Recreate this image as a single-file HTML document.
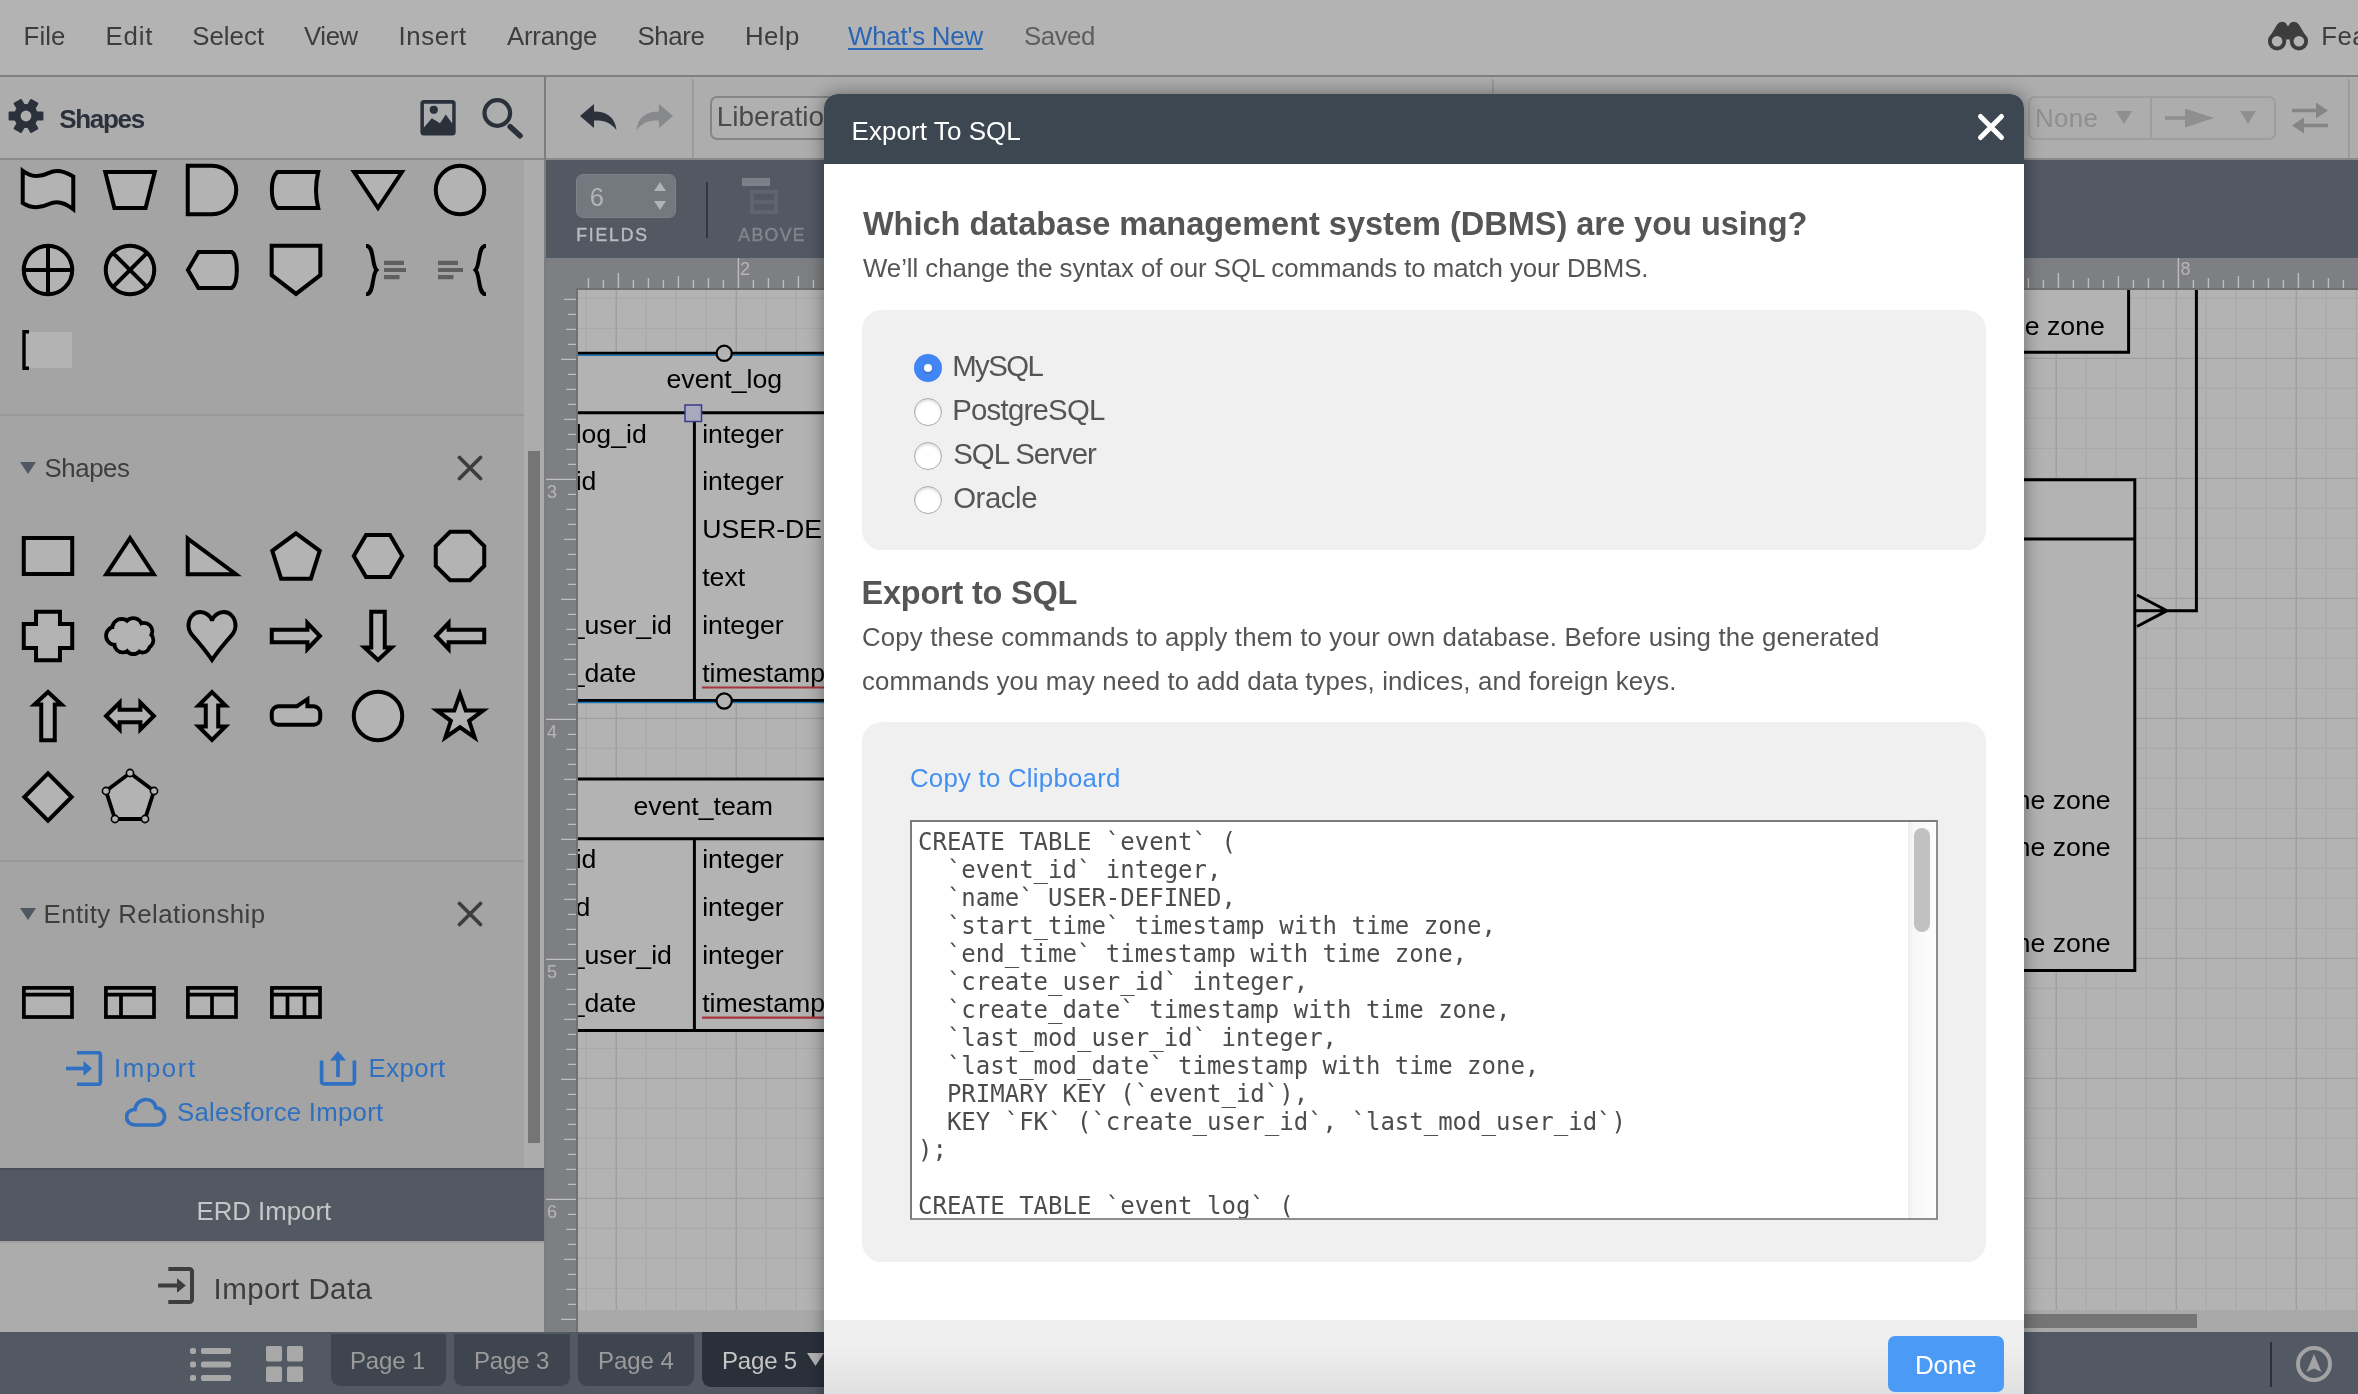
<!DOCTYPE html>
<html lang="en">
<head>
<meta charset="utf-8">
<title>Export To SQL</title>
<style>
*{box-sizing:border-box;margin:0;padding:0}
html,body{width:2358px;height:1394px;overflow:hidden;background:#b3b3b3}
body{will-change:transform;position:relative;font-family:"Liberation Sans",sans-serif;color:#3c3c3c}
.abs{position:absolute}
.t{position:absolute;white-space:nowrap;line-height:1}
#menubar{position:absolute;left:0;top:0;width:2358px;height:77px;background:#b3b3b3;border-bottom:2px solid #808080}
#lp-head{position:absolute;left:0;top:77px;width:545px;height:83px;background:#adadad;border-bottom:2px solid #8a8a8a}
#lp-body{position:absolute;left:0;top:160px;width:524px;height:1008px;background:#a4a4a4}
#lp-track{position:absolute;left:524px;top:160px;width:21px;height:1008px;background:#acacac}
#lp-thumb{position:absolute;left:528px;top:451px;width:12px;height:692px;background:#757575}
#vdiv{position:absolute;left:544px;top:77px;width:2px;height:1255px;background:#7d7d7d}
#erdbar{position:absolute;left:0;top:1168px;width:544px;height:73px;background:#525963;border-top:2px solid #474d56}
#impdata{position:absolute;left:0;top:1241px;width:544px;height:91px;background:#acacac;border-top:2px solid #a0a0a0}
#toolbar{position:absolute;left:546px;top:77px;width:1812px;height:83px;background:#adadad;border-bottom:2px solid #8a8a8a}
#darkbar{position:absolute;left:546px;top:160px;width:1812px;height:98px;background:#525963}
#bottombar{position:absolute;left:0;top:1332px;width:2358px;height:62px;background:#525963}
#hscroll{position:absolute;left:578px;top:1310px;width:1780px;height:22px;background:#a9a9a9}
#hthumb{position:absolute;left:900px;top:1314px;width:1297px;height:14px;background:#757575}
.tab{position:absolute;top:1334px;height:52px;background:#3e454f;border-radius:0 0 9px 9px}
#modal{position:absolute;left:824px;top:94px;width:1200px;height:1320px;background:#fff;border-radius:14px 14px 0 0;box-shadow:0 0 18px 0 rgba(0,0,0,.42);overflow:hidden;color:#555}
#mhead{position:absolute;left:0;top:0;width:1200px;height:70px;background:#3d4751}
#mfoot{position:absolute;left:0;top:1226px;width:1200px;height:80px;background:linear-gradient(#f0f0f0 0%,#efefef 30%,#dedede 100%)}
.gbox{position:absolute;left:38px;width:1124px;background:#f0f0f0;border-radius:20px}
.radio{position:absolute;left:90px;width:28px;height:28px;border-radius:50%;background:#fff;border:1.5px solid #a9a9a9;box-shadow:inset 0 2px 3px rgba(0,0,0,.13)}
.radio.on{background:#4285f4;border:0;box-shadow:none}
.radio.on::after{content:"";position:absolute;left:10px;top:10px;width:8px;height:8px;border-radius:50%;background:#fff;box-shadow:0 1px 1px rgba(0,0,0,.3)}
#ta{position:absolute;left:86px;top:726px;width:1028px;height:400px;background:#fff;border:2px solid #7c7c7c;border-right-color:#8e8e8e;border-bottom-color:#8e8e8e;overflow:hidden}
#ta pre{position:absolute;left:6px;top:6px;font-family:"DejaVu Sans Mono","Liberation Mono",monospace;font-size:24px;line-height:28px;color:#4c4c4c;white-space:pre}
#ta-track{position:absolute;right:0;top:0;width:28px;height:396px;background:linear-gradient(90deg,#ececec 0,#f7f7f7 5px,#fdfdfd 100%);}
#ta-thumb{position:absolute;left:1002px;top:6px;width:16px;height:104px;border-radius:8px;background:#c1c1c1}
</style>
</head>
<body>
<div id="menubar">
<span class="t" style="left:23.6px;top:24.2px;font-size:25.8px;letter-spacing:0.09px;color:#3d3d3d;">File</span>
<span class="t" style="left:105.5px;top:24.2px;font-size:25.8px;letter-spacing:0.81px;color:#3d3d3d;">Edit</span>
<span class="t" style="left:192.2px;top:24.2px;font-size:25.8px;letter-spacing:0.05px;color:#3d3d3d;">Select</span>
<span class="t" style="left:304.0px;top:24.2px;font-size:25.8px;letter-spacing:-0.41px;color:#3d3d3d;">View</span>
<span class="t" style="left:398.5px;top:24.2px;font-size:25.8px;letter-spacing:0.63px;color:#3d3d3d;">Insert</span>
<span class="t" style="left:507.0px;top:24.2px;font-size:25.8px;letter-spacing:-0.24px;color:#3d3d3d;">Arrange</span>
<span class="t" style="left:637.5px;top:24.2px;font-size:25.8px;letter-spacing:-0.37px;color:#3d3d3d;">Share</span>
<span class="t" style="left:745.0px;top:24.2px;font-size:25.8px;letter-spacing:0.43px;color:#3d3d3d;">Help</span>
<span class="t" style="left:848.0px;top:24.2px;font-size:25.8px;letter-spacing:-0.19px;color:#2a66b3;text-decoration:underline;text-decoration-thickness:2px;text-underline-offset:3px">What's New</span>
<span class="t" style="left:1024.0px;top:24.2px;font-size:25.8px;letter-spacing:-0.45px;color:#5e5e5e;">Saved</span>
<svg class="abs" style="left:2266px;top:20px" width="44" height="32" viewBox="0 0 44 32"><g fill="#3d3d3d"><path d="M2.4 19 L11.3 4.300 Q13 1.800 16 1.800 Q19.500 1.800 20.800 4.700 L22 6.600 L23.200 4.700 Q24.500 1.800 28 1.800 Q31 1.800 32.700 4.300 L41.600 19 L41 24 L30 24 L24.500 19.600 L19.500 19.600 L14 24 L3 24 Z"/><circle cx="11.1" cy="21.300" r="9.100"/><circle cx="32.900" cy="21.300" r="9.100"/></g><circle cx="11.1" cy="21.300" r="5.300" fill="#b3b3b3"/><circle cx="32.900" cy="21.300" r="5.300" fill="#b3b3b3"/></svg>
<span class="t" style="left:2321.3px;top:24.2px;font-size:25.8px;letter-spacing:0.46px;color:#3d3d3d;">Feature Find</span>
</div>
<div id="lp-head"></div><div id="lp-body"></div><div id="lp-track"></div><div id="lp-thumb"></div>
<svg class="abs" style="left:7px;top:97px" width="38" height="38" viewBox="-19 -19 38 38"><g fill="#2b313b"><circle r="12"/><rect x="-4.6" y="-17.4" width="9.2" height="9" rx="0.8" transform="rotate(30)"/><rect x="-4.6" y="-17.4" width="9.2" height="9" rx="0.8" transform="rotate(90)"/><rect x="-4.6" y="-17.4" width="9.2" height="9" rx="0.8" transform="rotate(150)"/><rect x="-4.6" y="-17.4" width="9.2" height="9" rx="0.8" transform="rotate(210)"/><rect x="-4.6" y="-17.4" width="9.2" height="9" rx="0.8" transform="rotate(270)"/><rect x="-4.6" y="-17.4" width="9.2" height="9" rx="0.8" transform="rotate(330)"/></g><circle r="5.4" fill="#adadad"/></svg>
<span class="t" style="left:59.2px;top:105.8px;font-size:26px;letter-spacing:-1.29px;color:#2b313b;font-weight:bold;">Shapes</span>
<svg class="abs" style="left:419px;top:99px" width="38" height="38" viewBox="0 0 38 38"><rect x="1.4" y="1" width="35.3" height="35.6" rx="3.6" fill="#2b313b"/><path d="M4.9 4.8 H33.2 V24.4 L26.8 15.500 L21 24.200 L12.800 19.300 L4.900 28.600Z" fill="#adadad"/><circle cx="14.8" cy="10.8" r="4.1" fill="#2b313b"/></svg>
<svg class="abs" style="left:478px;top:96px" width="48" height="46" viewBox="0 0 48 46" fill="none" stroke="#2b313b"><circle cx="19.3" cy="17" r="12.8" stroke-width="4.2"/><path d="M32.2 30.700 L42 39.700" stroke-width="5.6" stroke-linecap="round"/></svg>
<svg class="abs" style="left:22.0px;top:169.0px;overflow:visible;transform:scale(1.04)" width="52" height="42" viewBox="0 0 52 42" fill="#b3b3b3" stroke="#000" stroke-width="3.85" stroke-linejoin="miter"><path d="M1.7 2.5 C12 10 20 8 27 4.5 C34 1 42 3 50.3 8 V39.5 C42 33 34 31 27 34.5 C20 38 12 40 1.7 33.5Z"/></svg>
<svg class="abs" style="left:104.0px;top:171.0px;overflow:visible;transform:scale(1.04)" width="52" height="38" viewBox="0 0 52 38" fill="#b3b3b3" stroke="#000" stroke-width="3.85" stroke-linejoin="miter"><path d="M2.2 1.7 H49.8 L41 36.3 H11Z"/></svg>
<svg class="abs" style="left:187.0px;top:165.0px;overflow:visible;transform:scale(1.04)" width="50" height="50" viewBox="0 0 50 50" fill="#b3b3b3" stroke="#000" stroke-width="3.85" stroke-linejoin="miter"><path d="M1.7 1.7 H25 A23.3 23.3 0 0 1 25 48.3 H1.7Z"/></svg>
<svg class="abs" style="left:270.0px;top:171.0px;overflow:visible;transform:scale(1.04)" width="50" height="38" viewBox="0 0 50 38" fill="#b3b3b3" stroke="#000" stroke-width="3.85" stroke-linejoin="miter"><path d="M8 1.700 H47.300 C44.800 12 44.800 26 47.300 36.300 H8 C1 30 1 8 8 1.700Z"/></svg>
<svg class="abs" style="left:351.0px;top:170.0px;overflow:visible;transform:scale(1.04)" width="54" height="40" viewBox="0 0 54 40" fill="#b3b3b3" stroke="#000" stroke-width="3.85" stroke-linejoin="miter"><path d="M4 2.700 H50 L27 37.300Z"/></svg>
<svg class="abs" style="left:435.0px;top:165.0px;overflow:visible;transform:scale(1.04)" width="50" height="50" viewBox="0 0 50 50" fill="#b3b3b3" stroke="#000" stroke-width="3.85" stroke-linejoin="miter"><circle cx="25" cy="25" r="23.3"/></svg>
<svg class="abs" style="left:23.0px;top:245.0px;overflow:visible;transform:scale(1.04)" width="50" height="50" viewBox="0 0 50 50" fill="#b3b3b3" stroke="#000" stroke-width="3.85" stroke-linejoin="miter"><circle cx="25" cy="25" r="23.3"/><path d="M25 1.7V48.3M1.7 25H48.3"/></svg>
<svg class="abs" style="left:105.0px;top:245.0px;overflow:visible;transform:scale(1.04)" width="50" height="50" viewBox="0 0 50 50" fill="#b3b3b3" stroke="#000" stroke-width="3.85" stroke-linejoin="miter"><circle cx="25" cy="25" r="23.3"/><path d="M8.5 8.5L41.5 41.5M41.5 8.5L8.5 41.5"/></svg>
<svg class="abs" style="left:186.5px;top:251.0px;overflow:visible;transform:scale(1.04)" width="51" height="38" viewBox="0 0 51 38" fill="#b3b3b3" stroke="#000" stroke-width="3.85" stroke-linejoin="miter"><path d="M12 1.7 H44 C50.5 6 50.5 32 44 36.3 H12 L1.9 19Z"/></svg>
<svg class="abs" style="left:270.0px;top:245.0px;overflow:visible;transform:scale(1.04)" width="52" height="50" viewBox="0 0 52 50" fill="#b3b3b3" stroke="#000" stroke-width="3.85" stroke-linejoin="miter"><path d="M2.6 1.700 H49.400 V30 L26 48 L2.600 30Z"/></svg>
<svg class="abs" style="left:364px;top:244px" width="46" height="52" viewBox="0 0 46 52" fill="none"><path d="M2 1.700 C10.500 1.700 7.500 21 12.500 26 C7.500 31 10.500 50.300 2 50.300" stroke="#000" stroke-width="3.9"/><path d="M20 18.800h20M20 26h22M20 33.200h15.500" stroke="#5f5f5f" stroke-width="4.2"/></svg>
<svg class="abs" style="left:436px;top:244px" width="52" height="52" viewBox="0 0 52 52" fill="none"><path d="M50 1.700 C41.500 1.700 44.500 21 39.500 26 C44.500 31 41.500 50.300 50 50.300" stroke="#000" stroke-width="3.9"/><path d="M2 18.800h20M2 26h25M2 33.200h15.500" stroke="#5f5f5f" stroke-width="4.2"/></svg>
<div class="abs" style="left:26px;top:332px;width:46px;height:36px;background:#b3b3b3"></div>
<svg class="abs" style="left:22px;top:330px" width="10" height="40" viewBox="0 0 10 40" fill="none" stroke="#000" stroke-width="3.4"><path d="M7 1.7H2V38.3H7"/></svg>
<div class="abs" style="left:0;top:414px;width:524px;height:2px;background:#98989b"></div>
<svg class="abs" style="left:20px;top:462px" width="16" height="12" viewBox="0 0 16 12"><path d="M0 0H16L8 12Z" fill="#4f5763"/></svg><span class="t" style="left:44.6px;top:456.1px;font-size:25.8px;letter-spacing:-0.44px;color:#3d3d3d;">Shapes</span><svg class="abs" style="left:457px;top:455px" width="26" height="26" viewBox="0 0 26 26"><path d="M2.5 2.5L23.5 23.5M23.5 2.5L2.5 23.5" stroke="#3d3d3d" stroke-width="3.7" stroke-linecap="round" fill="none"/></svg>
<svg class="abs" style="left:23.0px;top:537.0px;overflow:visible;transform:scale(1.04)" width="50" height="38" viewBox="0 0 50 38" fill="#b3b3b3" stroke="#000" stroke-width="3.85" stroke-linejoin="miter"><rect x="1.7" y="1.7" width="46.6" height="34.6"/></svg>
<svg class="abs" style="left:104.0px;top:537.0px;overflow:visible;transform:scale(1.04)" width="52" height="38" viewBox="0 0 52 38" fill="#b3b3b3" stroke="#000" stroke-width="3.85" stroke-linejoin="miter"><path d="M26 1.800 L48.800 36.500 H3.200Z"/></svg>
<svg class="abs" style="left:187.0px;top:537.0px;overflow:visible;transform:scale(1.04)" width="52" height="38" viewBox="0 0 52 38" fill="#b3b3b3" stroke="#000" stroke-width="3.85" stroke-linejoin="miter"><path d="M1.7 2.200 L48 36.500 H1.700Z"/></svg>
<svg class="abs" style="left:271.0px;top:532.0px;overflow:visible;transform:scale(1.04)" width="50" height="48" viewBox="0 0 50 48" fill="#b3b3b3" stroke="#000" stroke-width="3.85" stroke-linejoin="miter"><path d="M25 2.2 L47.8 19 L39.3 45.8 H10.7 L2.2 19Z"/></svg>
<svg class="abs" style="left:353.0px;top:534.0px;overflow:visible;transform:scale(1.04)" width="50" height="44" viewBox="0 0 50 44" fill="#b3b3b3" stroke="#000" stroke-width="3.85" stroke-linejoin="miter"><path d="M13.5 1.7 H36.5 L48.3 22 L36.5 42.3 H13.5 L1.7 22Z"/></svg>
<svg class="abs" style="left:435.0px;top:531.0px;overflow:visible;transform:scale(1.04)" width="50" height="50" viewBox="0 0 50 50" fill="#b3b3b3" stroke="#000" stroke-width="3.85" stroke-linejoin="miter"><path d="M15.5 1.7 H34.5 L48.3 15.5 V34.5 L34.5 48.3 H15.5 L1.7 34.5 V15.5Z"/></svg>
<svg class="abs" style="left:23.0px;top:611.0px;overflow:visible;transform:scale(1.04)" width="50" height="50" viewBox="0 0 50 50" fill="#b3b3b3" stroke="#000" stroke-width="3.85" stroke-linejoin="miter"><path d="M13.5 1.7 H36.5 V13.5 H48.3 V36.5 H36.5 V48.3 H13.5 V36.5 H1.7 V13.5 H13.5Z"/></svg>
<svg class="abs" style="left:105.0px;top:617.0px;overflow:visible;transform:scale(1.04)" width="50" height="38" viewBox="0 0 50 38" fill="#b3b3b3" stroke="#000" stroke-width="3.85" stroke-linejoin="miter"><circle cx="17.1" cy="11.9" r="9.2"/><circle cx="28.2" cy="10.5" r="8.6"/><circle cx="38.4" cy="14.4" r="8.0"/><circle cx="39.4" cy="23.1" r="8.0"/><circle cx="37.1" cy="28.0" r="6.8"/><circle cx="28.2" cy="28.0" r="8.3"/><circle cx="18.0" cy="26.7" r="8.0"/><circle cx="10.7" cy="18.8" r="8.6"/><g stroke="none"><circle cx="17.1" cy="11.9" r="7.31"/><circle cx="28.2" cy="10.5" r="6.73"/><circle cx="38.4" cy="14.4" r="6.14"/><circle cx="39.4" cy="23.1" r="6.14"/><circle cx="37.1" cy="28.0" r="4.97"/><circle cx="28.2" cy="28.0" r="6.38"/><circle cx="18.0" cy="26.7" r="6.14"/><circle cx="10.7" cy="18.8" r="6.73"/><ellipse cx="25" cy="20" rx="12" ry="8"/></g></svg>
<svg class="abs" style="left:187.0px;top:611.0px;overflow:visible;transform:scale(1.04)" width="50" height="52" viewBox="0 0 50 52" fill="#b3b3b3" stroke="#000" stroke-width="3.85" stroke-linejoin="miter"><path d="M25 48 C22 43.500 17 37 11.500 30.500 C6 24.500 2.400 21 2.400 15.500 C2.400 7 8 2 13.500 2 C19 2 24 6 25 10.500 C26 6 31 2 36.500 2 C42 2 47.600 7 47.600 15.500 C47.600 21 44 24.500 38.500 30.500 C33 37 28 43.500 25 48Z"/></svg>
<svg class="abs" style="left:271.0px;top:621.0px;overflow:visible;transform:scale(1.04)" width="50" height="30" viewBox="0 0 50 30" fill="#b3b3b3" stroke="#000" stroke-width="3.85" stroke-linejoin="miter"><path d="M1.7 9 H36 V2.5 L48 15 L36 27.5 V21 H1.7Z"/></svg>
<svg class="abs" style="left:362.0px;top:611.0px;overflow:visible;transform:scale(1.04)" width="32" height="50" viewBox="0 0 32 50" fill="#b3b3b3" stroke="#000" stroke-width="3.85" stroke-linejoin="miter"><path d="M9.5 1.7 H22.5 V36 H29 L16 48 L3 36 H9.5Z"/></svg>
<svg class="abs" style="left:435.0px;top:621.0px;overflow:visible;transform:scale(1.04)" width="50" height="30" viewBox="0 0 50 30" fill="#b3b3b3" stroke="#000" stroke-width="3.85" stroke-linejoin="miter"><path d="M48.3 9 H14 V2.5 L2 15 L14 27.5 V21 H48.3Z"/></svg>
<svg class="abs" style="left:32.0px;top:691.0px;overflow:visible;transform:scale(1.04)" width="32" height="50" viewBox="0 0 32 50" fill="#b3b3b3" stroke="#000" stroke-width="3.85" stroke-linejoin="miter"><path d="M9.5 48.3 H22.5 V14 H29 L16 2 L3 14 H9.5Z"/></svg>
<svg class="abs" style="left:105.0px;top:700.0px;overflow:visible;transform:scale(1.04)" width="50" height="32" viewBox="0 0 50 32" fill="#b3b3b3" stroke="#000" stroke-width="3.85" stroke-linejoin="miter"><path d="M2 16 L15 3 V10 H35 V3 L48 16 L35 29 V22 H15 V29Z"/></svg>
<svg class="abs" style="left:196.0px;top:691.0px;overflow:visible;transform:scale(1.04)" width="32" height="50" viewBox="0 0 32 50" fill="#b3b3b3" stroke="#000" stroke-width="3.85" stroke-linejoin="miter"><path d="M16 2 L29 15 H22 V35 H29 L16 48 L3 35 H10 V15 H3Z"/></svg>
<svg class="abs" style="left:271.0px;top:698.0px;overflow:visible;transform:scale(1.04)" width="50" height="28" viewBox="0 0 50 28" fill="#b3b3b3" stroke="#000" stroke-width="3.85" stroke-linejoin="miter"><path d="M8 8.5 H26 L36 1.7 V8.5 H42 A6.5 6.5 0 0 1 48.3 15 V20 A6.5 6.5 0 0 1 42 26.3 H8 A6.5 6.5 0 0 1 1.7 20 V15 A6.5 6.5 0 0 1 8 8.5Z"/></svg>
<svg class="abs" style="left:353.0px;top:691.0px;overflow:visible;transform:scale(1.04)" width="50" height="50" viewBox="0 0 50 50" fill="#b3b3b3" stroke="#000" stroke-width="3.85" stroke-linejoin="miter"><circle cx="25" cy="25" r="23.3"/></svg>
<svg class="abs" style="left:433.0px;top:690.0px;overflow:visible;transform:scale(1.04)" width="54" height="50" viewBox="0 0 54 50" fill="#b3b3b3" stroke="#000" stroke-width="3.85" stroke-linejoin="miter"><path d="M27.0 5.0 L32.5 20.6 L49.3 20.6 L35.8 30.6 L41.0 46.6 L27.0 36.8 L13.0 46.6 L18.2 30.6 L4.7 20.6 L21.5 20.6Z"/></svg>
<svg class="abs" style="left:22.0px;top:771.0px;overflow:visible;transform:scale(1.04)" width="52" height="52" viewBox="0 0 52 52" fill="#b3b3b3" stroke="#000" stroke-width="3.85" stroke-linejoin="miter"><path d="M26 3.300 L48.700 26 L26 48.700 L3.300 26Z"/></svg>
<svg class="abs" style="left:102.0px;top:768.0px;overflow:visible;transform:scale(1.0)" width="56" height="56" viewBox="0 0 56 56" fill="#b3b3b3" stroke="#000" stroke-width="3.8" stroke-linejoin="miter"><path d="M28 5 L52 23 L43 51 H13 L4 23Z"/><g stroke-width="1.6"><circle cx="28" cy="5" r="3.6"/><circle cx="52" cy="23" r="3.6"/><circle cx="43" cy="51" r="3.6"/><circle cx="13" cy="51" r="3.6"/><circle cx="4" cy="23" r="3.6"/></g></svg>
<div class="abs" style="left:0;top:860px;width:524px;height:2px;background:#98989b"></div>
<svg class="abs" style="left:20px;top:908px" width="16" height="12" viewBox="0 0 16 12"><path d="M0 0H16L8 12Z" fill="#4f5763"/></svg><span class="t" style="left:43.6px;top:902.1px;font-size:25.8px;letter-spacing:0.43px;color:#3d3d3d;">Entity Relationship</span><svg class="abs" style="left:457px;top:901px" width="26" height="26" viewBox="0 0 26 26"><path d="M2.5 2.5L23.5 23.5M23.5 2.5L2.5 23.5" stroke="#3d3d3d" stroke-width="3.7" stroke-linecap="round" fill="none"/></svg>
<svg class="abs" style="left:22.0px;top:985.5px;overflow:visible;transform:scale(1.0)" width="52" height="33" viewBox="0 0 52 33" fill="#b3b3b3" stroke="#000" stroke-width="3.7" stroke-linejoin="miter"><rect x="1.9" y="1.9" width="48.1" height="29.1"/><path d="M1.9 8.6H50"/></svg>
<svg class="abs" style="left:104.0px;top:985.5px;overflow:visible;transform:scale(1.0)" width="52" height="33" viewBox="0 0 52 33" fill="#b3b3b3" stroke="#000" stroke-width="3.7" stroke-linejoin="miter"><rect x="1.9" y="1.9" width="48.1" height="29.1"/><path d="M1.9 8.6H50M17 8.6V31"/></svg>
<svg class="abs" style="left:186.0px;top:985.5px;overflow:visible;transform:scale(1.0)" width="52" height="33" viewBox="0 0 52 33" fill="#b3b3b3" stroke="#000" stroke-width="3.7" stroke-linejoin="miter"><rect x="1.9" y="1.9" width="48.1" height="29.1"/><path d="M1.9 8.6H50M26 8.6V31"/></svg>
<svg class="abs" style="left:270.0px;top:985.5px;overflow:visible;transform:scale(1.0)" width="52" height="33" viewBox="0 0 52 33" fill="#b3b3b3" stroke="#000" stroke-width="3.7" stroke-linejoin="miter"><rect x="1.9" y="1.9" width="48.1" height="29.1"/><path d="M1.9 8.6H50M17.5 8.6V31M34.5 8.6V31"/></svg>
<svg class="abs" style="left:65px;top:1051px" width="38" height="35" viewBox="0 0 38 35" fill="none" stroke="#2f70c0" stroke-width="3.7"><path d="M12 1.6 H33 A2.5 2.5 0 0 1 35.4 4 V31 A2.5 2.5 0 0 1 33 33.4 H12"/><path d="M1 17.5 H21"/><path d="M18.500 10 L27 17.500 L18.500 25Z" fill="#2f70c0" stroke="none"/></svg>
<span class="t" style="left:114.0px;top:1055.8px;font-size:25.8px;letter-spacing:1.61px;color:#2f70c0;">Import</span>
<svg class="abs" style="left:319px;top:1050px" width="38" height="36" viewBox="0 0 38 36" fill="none" stroke="#2f70c0" stroke-width="3.7"><path d="M2.6 10.5 V31.5 A2.5 2.5 0 0 0 5 33.9 H33 A2.5 2.5 0 0 0 35.4 31.5 V10.5"/><path d="M19 27 V8"/><path d="M11 10.500 L19 1 L27 10.500Z" fill="#2f70c0" stroke="none"/></svg>
<span class="t" style="left:368.5px;top:1055.8px;font-size:25.8px;letter-spacing:0.42px;color:#2f70c0;">Export</span>
<svg class="abs" style="left:125px;top:1097px" width="42" height="30" viewBox="0 0 42 30" fill="none" stroke="#2f70c0" stroke-width="3.7"><path d="M11 28 C-2 28 -1 12 10 12.5 C11 1 28 -2 31 11 C42 11 43 28 31 28Z"/></svg>
<span class="t" style="left:177.0px;top:1099.7px;font-size:25.8px;letter-spacing:0.25px;color:#2f70c0;">Salesforce Import</span>
<div id="erdbar"></div>
<span class="t" style="left:196.5px;top:1198.5px;font-size:25.8px;letter-spacing:-0.01px;color:#c6c6c6;">ERD Import</span>
<div id="impdata"></div>
<svg class="abs" style="left:157px;top:1267px" width="38" height="37" viewBox="0 0 38 37" fill="none" stroke="#3d3d3d" stroke-width="4"><path d="M11.3 2 H32.500 A2.500 2.500 0 0 1 35 4.500 V32.500 A2.500 2.500 0 0 1 32.500 35 H11.300"/><path d="M1.1 18.500 H21"/><path d="M20 11.300 L28.800 18.500 L20 25.700Z" fill="#3d3d3d" stroke="none"/></svg>
<span class="t" style="left:213.5px;top:1273.5px;font-size:29.5px;letter-spacing:0.44px;color:#3d3d3d;">Import Data</span>
<div id="vdiv"></div>
<div id="toolbar"></div>
<svg class="abs" style="left:579px;top:103px" width="40" height="28" viewBox="0 0 40 28"><path d="M15 1 L1 13 L15 25 V17.5 C24 17 31 19 37.5 27 C36 14 28 8.5 15 8.5Z" fill="#2b313b"/></svg>
<svg class="abs" style="left:634px;top:103px" width="40" height="28" viewBox="0 0 40 28"><path d="M25 1 L39 13 L25 25 V17.5 C16 17 9 19 2.5 27 C4 14 12 8.5 25 8.5Z" fill="#87898c"/></svg>
<div class="abs" style="left:692px;top:79px;width:2px;height:79px;background:#9b9b9b"></div>
<div class="abs" style="left:710px;top:96px;width:330px;height:44px;border:2px solid #858585;border-radius:7px;background:#b0b0b0"></div>
<span class="t" style="left:716.7px;top:102.8px;font-size:28px;color:#4a4a4a;">Liberation Sans</span>
<div class="abs" style="left:1492px;top:79px;width:2px;height:79px;background:#9b9b9b"></div>
<div class="abs" style="left:2028px;top:96px;width:248px;height:44px;border:2px solid #9e9e9e;border-radius:7px"></div>
<div class="abs" style="left:2150px;top:98px;width:2px;height:40px;background:#9e9e9e"></div>
<span class="t" style="left:2035.0px;top:105.7px;font-size:25.8px;letter-spacing:0.39px;color:#8f8f8f;">None</span>
<svg class="abs" style="left:2116px;top:111px" width="16" height="13" viewBox="0 0 16 13"><path d="M0 0H16L8 13Z" fill="#8f8f8f"/></svg>
<svg class="abs" style="left:2164px;top:104px" width="52" height="28" viewBox="0 0 52 28"><path d="M1 14H24" stroke="#8f8f8f" stroke-width="3.5"/><path d="M21 4.5 L50 14 L21 23.5Z" fill="#8f8f8f"/></svg>
<svg class="abs" style="left:2240px;top:111px" width="16" height="13" viewBox="0 0 16 13"><path d="M0 0H16L8 13Z" fill="#8f8f8f"/></svg>
<svg class="abs" style="left:2290px;top:101px" width="40" height="34" viewBox="0 0 40 34"><g stroke="#858585" stroke-width="3.6" fill="none"><path d="M2 9.5H30M38 24.5H10"/></g><g fill="#858585"><path d="M26 1.500L38 9.500L26 17.500Z"/><path d="M14 16.500L2 24.500L14 32.500Z"/></g></svg>
<div class="abs" style="left:2348px;top:79px;width:2px;height:79px;background:#9b9b9b"></div>
<div id="darkbar"></div>
<div class="abs" style="left:576px;top:174px;width:100px;height:44px;background:#73797f;border-radius:7px;border:1px solid #7e8389"></div>
<span class="t" style="left:589.8px;top:184.6px;font-size:25.5px;color:#b2b3b5;">6</span>
<svg class="abs" style="left:653px;top:182px" width="14" height="28" viewBox="0 0 14 28" fill="#b0b3b7"><path d="M7 0L13 9H1Z"/><path d="M7 28L13 19H1Z"/></svg>
<span class="t" style="left:576.2px;top:227.1px;font-size:17.6px;letter-spacing:1.83px;color:#b9bbbe;-webkit-text-stroke:0.45px #b9bbbe;">FIELDS</span>
<div class="abs" style="left:706px;top:182px;width:2px;height:56px;background:#2f3640"></div>
<div class="abs" style="left:742px;top:178px;width:28px;height:8px;background:#7b8189"></div>
<svg class="abs" style="left:750px;top:190px" width="28" height="24" viewBox="0 0 28 24" fill="none" stroke="#5f656e" stroke-width="3.8"><rect x="1.9" y="1.9" width="24.2" height="20.2"/><path d="M1.9 12H26.1"/></svg>
<span class="t" style="left:738.3px;top:227.1px;font-size:17.6px;letter-spacing:1.40px;color:#80868d;-webkit-text-stroke:0.45px #80868d;">ABOVE</span>
<div id="hscroll"></div><div id="hthumb"></div><div id="bottombar"></div>
<svg class="abs" style="left:190px;top:1347px" width="41" height="35" viewBox="0 0 41 35" fill="#a8a8a8"><rect x="0" y="1" width="6" height="6" rx="2"/><rect x="11" y="1" width="30" height="6" rx="2"/><rect x="0" y="14.500" width="6" height="6" rx="2"/><rect x="11" y="14.500" width="30" height="6" rx="2"/><rect x="0" y="28" width="6" height="6" rx="2"/><rect x="11" y="28" width="30" height="6" rx="2"/></svg>
<svg class="abs" style="left:266px;top:1346px" width="37" height="36" viewBox="0 0 37 36" fill="#a8a8a8"><rect x="0" y="0" width="16" height="15.500" rx="1.8"/><rect x="21" y="0" width="16" height="15.500" rx="1.8"/><rect x="0" y="20.500" width="16" height="15.500" rx="1.8"/><rect x="21" y="20.500" width="16" height="15.500" rx="1.8"/></svg>
<div class="tab" style="left:331px;width:115px"></div>
<span class="t" style="left:350.0px;top:1349.2px;font-size:24px;letter-spacing:-0.14px;color:#9b9b9b;">Page 1</span>
<div class="tab" style="left:454px;width:116px"></div>
<span class="t" style="left:474.0px;top:1349.2px;font-size:24px;letter-spacing:-0.14px;color:#9b9b9b;">Page 3</span>
<div class="tab" style="left:578px;width:116px"></div>
<span class="t" style="left:598.0px;top:1349.2px;font-size:24px;letter-spacing:-0.06px;color:#9b9b9b;">Page 4</span>
<div class="tab" style="left:702px;width:160px;background:#2a303a;top:1332px;height:55px"></div>
<span class="t" style="left:722.0px;top:1349.2px;font-size:24px;letter-spacing:-0.18px;color:#c6c6c6;">Page 5</span>
<svg class="abs" style="left:807px;top:1353px" width="17" height="13" viewBox="0 0 17 13"><path d="M0 0H17L8.500 13Z" fill="#b5b5b5"/></svg>
<div class="abs" style="left:2270px;top:1342px;width:2px;height:45px;background:#2a303a"></div>
<svg class="abs" style="left:2295px;top:1345px" width="38" height="38" viewBox="0 0 38 38"><circle cx="19" cy="19" r="16" fill="none" stroke="#a3a3a3" stroke-width="4"/><path d="M19 9 L26.500 27 L19 23.500 L11.500 27Z" fill="#a3a3a3"/></svg>
<svg class="abs" style="left:0;top:0" width="2358" height="1394" viewBox="0 0 2358 1394" font-family="Liberation Sans, sans-serif">
<defs><clipPath id="paper"><rect x="578" y="290" width="1780" height="1020"/></clipPath></defs>
<rect x="546" y="258" width="1812" height="32" fill="#7d7f82"/>
<rect x="546" y="258" width="32" height="1074" fill="#7d7f82"/>
<rect x="578" y="288" width="1780" height="2" fill="#6e7073"/>
<rect x="576" y="288" width="2" height="1044" fill="#6e7073"/>
<rect x="578" y="290" width="1780" height="1020" fill="#b3b3b3"/>
<path d="M586.3 290V1310M646.3 290V1310M676.3 290V1310M706.3 290V1310M766.3 290V1310M796.3 290V1310M826.3 290V1310M886.3 290V1310M916.3 290V1310M946.3 290V1310M1006.3 290V1310M1036.3 290V1310M1066.3 290V1310M1126.3 290V1310M1156.3 290V1310M1186.3 290V1310M1246.3 290V1310M1276.3 290V1310M1306.3 290V1310M1366.3 290V1310M1396.3 290V1310M1426.3 290V1310M1486.3 290V1310M1516.3 290V1310M1546.3 290V1310M1606.3 290V1310M1636.3 290V1310M1666.3 290V1310M1726.3 290V1310M1756.3 290V1310M1786.3 290V1310M1846.3 290V1310M1876.3 290V1310M1906.3 290V1310M1966.3 290V1310M1996.3 290V1310M2026.3 290V1310M2086.3 290V1310M2116.3 290V1310M2146.3 290V1310M2206.3 290V1310M2236.3 290V1310M2266.3 290V1310M2326.3 290V1310M2356.3 290V1310M578 298.4H2358M578 328.4H2358M578 388.4H2358M578 418.4H2358M578 448.4H2358M578 508.4H2358M578 538.4H2358M578 568.4H2358M578 628.4H2358M578 658.4H2358M578 688.4H2358M578 748.4H2358M578 778.4H2358M578 808.4H2358M578 868.4H2358M578 898.4H2358M578 928.4H2358M578 988.4H2358M578 1018.4H2358M578 1048.4H2358M578 1108.4H2358M578 1138.4H2358M578 1168.4H2358M578 1228.4H2358M578 1258.4H2358M578 1288.4H2358" stroke="#a9a9a9" stroke-width="1.2" fill="none"/>
<path d="M616.3 290V1310M736.3 290V1310M856.3 290V1310M976.3 290V1310M1096.3 290V1310M1216.3 290V1310M1336.3 290V1310M1456.3 290V1310M1576.3 290V1310M1696.3 290V1310M1816.3 290V1310M1936.3 290V1310M2056.3 290V1310M2176.3 290V1310M2296.3 290V1310M578 358.4H2358M578 478.4H2358M578 598.4H2358M578 718.4H2358M578 838.4H2358M578 958.4H2358M578 1078.4H2358M578 1198.4H2358" stroke="#9f9f9f" stroke-width="1.4" fill="none"/>
<path d="M588.4 278V288M603.4 280V288M618.4 273V288M633.4 280V288M648.4 278V288M663.4 280V288M678.4 276V288M693.4 280V288M708.4 278V288M723.4 280V288M738.4 258V288M753.4 280V288M768.4 278V288M783.4 280V288M798.4 276V288M813.4 280V288M828.4 278V288M843.4 280V288M858.4 273V288M873.4 280V288M888.4 278V288M903.4 280V288M918.4 276V288M933.4 280V288M948.4 278V288M963.4 280V288M978.4 258V288M993.4 280V288M1008.4 278V288M1023.4 280V288M1038.4 276V288M1053.4 280V288M1068.4 278V288M1083.4 280V288M1098.4 273V288M1113.4 280V288M1128.4 278V288M1143.4 280V288M1158.4 276V288M1173.4 280V288M1188.4 278V288M1203.4 280V288M1218.4 258V288M1233.4 280V288M1248.4 278V288M1263.4 280V288M1278.4 276V288M1293.4 280V288M1308.4 278V288M1323.4 280V288M1338.4 273V288M1353.4 280V288M1368.4 278V288M1383.4 280V288M1398.4 276V288M1413.4 280V288M1428.4 278V288M1443.4 280V288M1458.4 258V288M1473.4 280V288M1488.4 278V288M1503.4 280V288M1518.4 276V288M1533.4 280V288M1548.4 278V288M1563.4 280V288M1578.4 273V288M1593.4 280V288M1608.4 278V288M1623.4 280V288M1638.4 276V288M1653.4 280V288M1668.4 278V288M1683.4 280V288M1698.4 258V288M1713.4 280V288M1728.4 278V288M1743.4 280V288M1758.4 276V288M1773.4 280V288M1788.4 278V288M1803.4 280V288M1818.4 273V288M1833.4 280V288M1848.4 278V288M1863.4 280V288M1878.4 276V288M1893.4 280V288M1908.4 278V288M1923.4 280V288M1938.4 258V288M1953.4 280V288M1968.4 278V288M1983.4 280V288M1998.4 276V288M2013.4 280V288M2028.4 278V288M2043.4 280V288M2058.4 273V288M2073.4 280V288M2088.4 278V288M2103.4 280V288M2118.4 276V288M2133.4 280V288M2148.4 278V288M2163.4 280V288M2178.4 258V288M2193.4 280V288M2208.4 278V288M2223.4 280V288M2238.4 276V288M2253.4 280V288M2268.4 278V288M2283.4 280V288M2298.4 273V288M2313.4 280V288M2328.4 278V288M2343.4 280V288M564 299.4H576M568 314.4H576M566 329.4H576M568 344.4H576M561 359.4H576M568 374.4H576M566 389.4H576M568 404.4H576M564 419.4H576M568 434.4H576M566 449.4H576M568 464.4H576M546 479.4H576M568 494.4H576M566 509.4H576M568 524.4H576M564 539.4H576M568 554.4H576M566 569.4H576M568 584.4H576M561 599.4H576M568 614.4H576M566 629.4H576M568 644.4H576M564 659.4H576M568 674.4H576M566 689.4H576M568 704.4H576M546 719.4H576M568 734.4H576M566 749.4H576M568 764.4H576M564 779.4H576M568 794.4H576M566 809.4H576M568 824.4H576M561 839.4H576M568 854.4H576M566 869.4H576M568 884.4H576M564 899.4H576M568 914.4H576M566 929.4H576M568 944.4H576M546 959.4H576M568 974.4H576M566 989.4H576M568 1004.4H576M564 1019.4H576M568 1034.4H576M566 1049.4H576M568 1064.4H576M561 1079.4H576M568 1094.4H576M566 1109.4H576M568 1124.4H576M564 1139.4H576M568 1154.4H576M566 1169.4H576M568 1184.4H576M546 1199.4H576M568 1214.4H576M566 1229.4H576M568 1244.4H576M564 1259.4H576M568 1274.4H576M566 1289.4H576M568 1304.4H576M561 1319.4H576" stroke="#bdbdbd" stroke-width="1.4" fill="none"/>
<g font-size="18" fill="#b6b6b6">
<text x="740" y="275">2</text><text x="2180.5" y="275">8</text>
<text x="547" y="498.4">3</text>
<text x="547" y="738.4">4</text>
<text x="547" y="978.4">5</text>
<text x="547" y="1218.4">6</text>
</g>
<g clip-path="url(#paper)" font-size="26.67" fill="#000">
<g fill="#b3b3b3"><rect x="560" y="353" width="280" height="347"/><rect x="560" y="779" width="280" height="251"/><rect x="2000" y="280" width="128.6" height="72"/><rect x="2000" y="480" width="134.8" height="490"/></g>
<g stroke="#000" stroke-width="3" fill="none">
<path d="M560 353.2H830 M560 412.7H830 M560 700.5H830 M694.4 412.7V700.5"/>
<path d="M560 779H830 M560 838.7H830 M560 1030.5H830 M694.4 838.7V1030.5"/>
<path d="M2000 352.3H2128.6V280 M2196.4 280V610.7H2167 M2137 595L2167 610.7L2137 626.5 M2134.8 610.7H2167"/>
<path d="M2000 479.7H2134.8V970.6H2000 M2000 539H2134.8"/>
</g>
<path d="M560 355.2H830 M560 702.5H830" stroke="#1b75b5" stroke-width="1.6" fill="none"/>
<g stroke="#000" stroke-width="2.2" fill="#b3b3b3"><circle cx="724.2" cy="353.3" r="7.6"/><circle cx="724.2" cy="701" r="7.6"/></g>
<rect x="685" y="405" width="16.5" height="16.5" fill="#a9a9bd" stroke="#3b3b8c" stroke-width="1.5"/>
<text x="724.3" y="388" text-anchor="middle">event_log</text>
<text x="703.2" y="814.5" text-anchor="middle">event_team</text>
<text x="495.6" y="442.6">event_log_id</text>
<text x="702.2" y="442.6">integer</text>
<text x="495.6" y="490.4">event_id</text>
<text x="702.2" y="490.4">integer</text>
<text x="702.2" y="538.2">USER-DEFINED</text>
<text x="702.2" y="586.0">text</text>
<text x="495.6" y="633.8">create_user_id</text>
<text x="702.2" y="633.8">integer</text>
<text x="495.6" y="681.6">create_date</text>
<text x="702.2" y="681.6">timestamp with time zone</text>
<text x="495.6" y="867.8">event_id</text>
<text x="702.2" y="867.8">integer</text>
<text x="495.6" y="915.7">team_id</text>
<text x="702.2" y="915.7">integer</text>
<text x="495.6" y="963.6">create_user_id</text>
<text x="702.2" y="963.6">integer</text>
<text x="495.6" y="1011.5">create_date</text>
<text x="702.2" y="1011.5">timestamp with time zone</text>
<path d="M702 687.5H1000 M702 1017.7H1000" stroke="#a6353b" stroke-width="2.2" fill="none"/>
<text x="2104.8" y="334.5" text-anchor="end">timestamp with time zone</text>
<text x="2110.6" y="808.5" text-anchor="end">timestamp with time zone</text>
<text x="2110.6" y="856.3" text-anchor="end">timestamp with time zone</text>
<text x="2110.6" y="951.9" text-anchor="end">timestamp with time zone</text>
</g>
</svg>
<div id="modal">
<div id="mhead"></div>
<span class="t" style="left:27.5px;top:24.1px;font-size:26px;letter-spacing:0.06px;color:#fff;">Export To SQL</span>
<svg class="abs" style="left:1152px;top:18px" width="30" height="30" viewBox="0 0 30 30"><path d="M4.5 4.5L25.5 25.5M25.5 4.5L4.500 25.5" stroke="#fff" stroke-width="5" stroke-linecap="round" fill="none"/></svg>
<span class="t" style="left:38.9px;top:114.1px;font-size:32.5px;color:#555;font-weight:bold;">Which database management system (DBMS) are you using?</span>
<span class="t" style="left:39.0px;top:162.2px;font-size:25.8px;letter-spacing:-0.05px;">We’ll change the syntax of our SQL commands to match your DBMS.</span>
<div class="gbox" style="top:216px;height:240px"></div>
<div class="radio on" style="top:259.9px"></div>
<span class="t" style="left:128.2px;top:257.0px;font-size:29.4px;letter-spacing:-1.61px;">MySQL</span>
<div class="radio" style="top:303.9px"></div>
<span class="t" style="left:128.2px;top:301.0px;font-size:29.4px;letter-spacing:-0.77px;">PostgreSQL</span>
<div class="radio" style="top:347.9px"></div>
<span class="t" style="left:129.2px;top:345.0px;font-size:29.4px;letter-spacing:-0.97px;">SQL Server</span>
<div class="radio" style="top:391.9px"></div>
<span class="t" style="left:129.2px;top:389.0px;font-size:29.4px;letter-spacing:-0.44px;">Oracle</span>
<span class="t" style="left:37.5px;top:482.9px;font-size:32.5px;letter-spacing:-0.21px;color:#555;font-weight:bold;">Export to SQL</span>
<span class="t" style="left:38.0px;top:530.7px;font-size:25.8px;letter-spacing:0.15px;">Copy these commands to apply them to your own database. Before using the generated</span>
<span class="t" style="left:38.0px;top:574.7px;font-size:25.8px;letter-spacing:0.13px;">commands you may need to add data types, indices, and foreign keys.</span>
<div class="gbox" style="top:628px;height:540px"></div>
<span class="t" style="left:86.0px;top:671.9px;font-size:25.8px;letter-spacing:0.24px;color:#4290f2;">Copy to Clipboard</span>
<div id="ta"><pre>CREATE TABLE `event` (
  `event_id` integer,
  `name` USER-DEFINED,
  `start_time` timestamp with time zone,
  `end_time` timestamp with time zone,
  `create_user_id` integer,
  `create_date` timestamp with time zone,
  `last_mod_user_id` integer,
  `last_mod_date` timestamp with time zone,
  PRIMARY KEY (`event_id`),
  KEY `FK` (`create_user_id`, `last_mod_user_id`)
);

CREATE TABLE `event_log` (
  `event_log_id` integer,
  `event_id` integer,</pre><div id="ta-track"></div><div id="ta-thumb"></div></div>
<div id="mfoot"></div>
<div class="abs" style="left:1064px;top:1242px;width:116px;height:56px;background:#4b9bf6;border-radius:7px"></div>
<span class="t" style="left:1091.0px;top:1257.7px;font-size:26px;letter-spacing:-0.23px;color:#fff;">Done</span>
</div>
</body>
</html>
